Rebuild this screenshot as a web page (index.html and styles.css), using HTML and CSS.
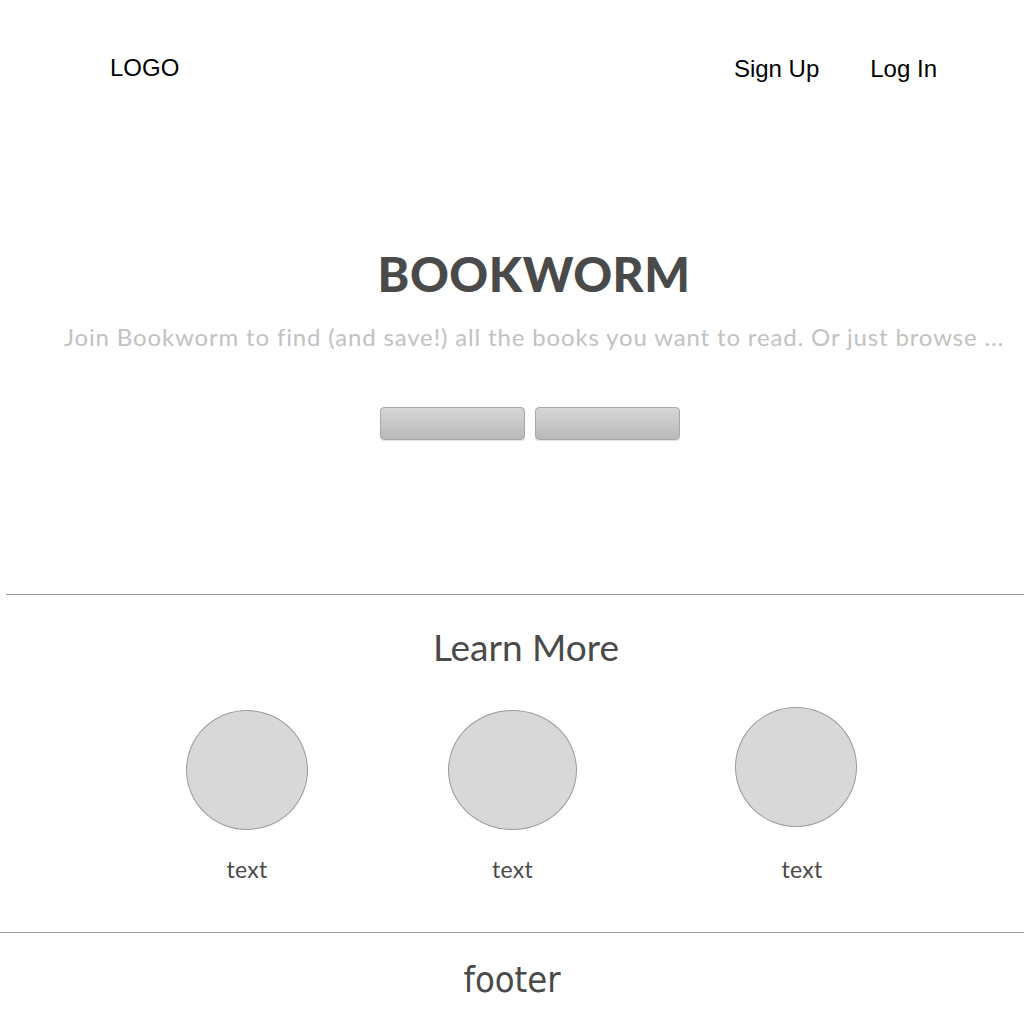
FILE: index.html
```html
<!DOCTYPE html>
<html lang="en">
<head>
<meta charset="utf-8">
<title>Bookworm</title>
<link rel="stylesheet" href="styles.css">
</head>
<body>
  <header class="topbar">
    <div class="logo">LOGO</div>
    <nav class="auth">
      <a class="auth-link" href="#">Sign Up</a>
      <a class="auth-link" href="#">Log In</a>
    </nav>
  </header>

  <section class="hero">
    <h1 class="title">BOOKWORM</h1>
    <p class="subtitle">Join Bookworm to find (and save!) all the books you want to read. Or just browse ...</p>
    <div class="actions">
      <button class="btn" type="button"></button>
      <button class="btn" type="button"></button>
    </div>
  </section>

  <hr class="rule rule-top">

  <section class="learn">
    <h2 class="learn-title">Learn More</h2>
    <div class="features">
      <div class="feature f1">
        <div class="circle"></div>
        <div class="feature-text">text</div>
      </div>
      <div class="feature f2">
        <div class="circle"></div>
        <div class="feature-text">text</div>
      </div>
      <div class="feature f3">
        <div class="circle"></div>
        <div class="feature-text">text</div>
      </div>
    </div>
  </section>

  <hr class="rule">

  <footer class="footer">footer</footer>
</body>
</html>
```

FILE: styles.css
```css
* { box-sizing: border-box; }

html, body {
  margin: 0;
  padding: 0;
  background: #ffffff;
}

body {
  width: 1024px;
  font-family: "Lato", "Liberation Sans", sans-serif;
  color: #4a4a4a;
}

/* Header */
.topbar {
  display: flex;
  justify-content: space-between;
  align-items: flex-start;
  padding: 55px 87px 0 110px;
  height: 80px;
  font-family: "Liberation Sans", Arial, sans-serif;
  font-size: 24px;
  line-height: 28px;
  color: #000;
}

.logo { margin-top: -1px; }

.auth {
  display: flex;
  gap: 51px;
}

.auth-link {
  color: #000;
  text-decoration: none;
}

/* Hero */
.hero {
  display: flex;
  flex-direction: column;
  align-items: center;
  padding: 170px 0 0 44px;
  height: 514px;
}

.title {
  margin: 0;
  font-family: "Lato", sans-serif;
  font-weight: 900;
  font-size: 48px;
  line-height: 48px;
  color: #4a4a4a;
  letter-spacing: 0.5px;
}

.subtitle {
  margin: 24px 0 0 0;
  font-size: 24px;
  line-height: 29px;
  color: #c2c2c2;
  letter-spacing: 0.85px;
  white-space: nowrap;
}

.actions {
  display: flex;
  gap: 10px;
  margin-top: 56px;
  padding-right: 8px;
}

.btn {
  width: 145px;
  height: 33px;
  border: 1px solid #a8a8a8;
  border-radius: 4px;
  background: linear-gradient(#d6d6d6, #b9b9b9);
  box-shadow: 0 1px 1px rgba(0, 0, 0, 0.12);
  padding: 0;
}

/* Rules */
.rule {
  margin: 0;
  border: 0;
  height: 1px;
  background: #9b9b9b;
}

.rule-top { margin-left: 6px; }

/* Learn more */
.learn {
  height: 337px;
  padding-top: 28px;
}

.learn-title {
  margin: 0;
  padding-left: 28px;
  text-align: center;
  font-weight: 400;
  font-size: 37px;
  line-height: 48px;
  color: #4a4a4a;
}

.features {
  display: flex;
  align-items: flex-start;
  margin-top: 39px;
  padding-left: 186px;
}

.feature {
  display: flex;
  flex-direction: column;
  align-items: center;
}

.f2 { margin-left: 140px; }
.f3 { margin-left: 158px; margin-top: -3px; }

.circle {
  width: 122px;
  height: 120px;
  border-radius: 50%;
  background: #d8d8d8;
  border: 1px solid #9b9b9b;
}

.f2 .circle { width: 129px; }

.feature-text {
  margin-top: 26px;
  font-size: 23px;
  line-height: 26px;
  letter-spacing: 0.3px;
  color: #4a4a4a;
}

.f3 .feature-text { margin-top: 29px; padding-left: 12px; }

/* Footer */
.footer {
  padding-top: 26px;
  text-align: center;
  font-family: "DejaVu Sans", sans-serif;
  font-stretch: condensed;
  font-size: 36px;
  color: #4a4a4a;
}
```
